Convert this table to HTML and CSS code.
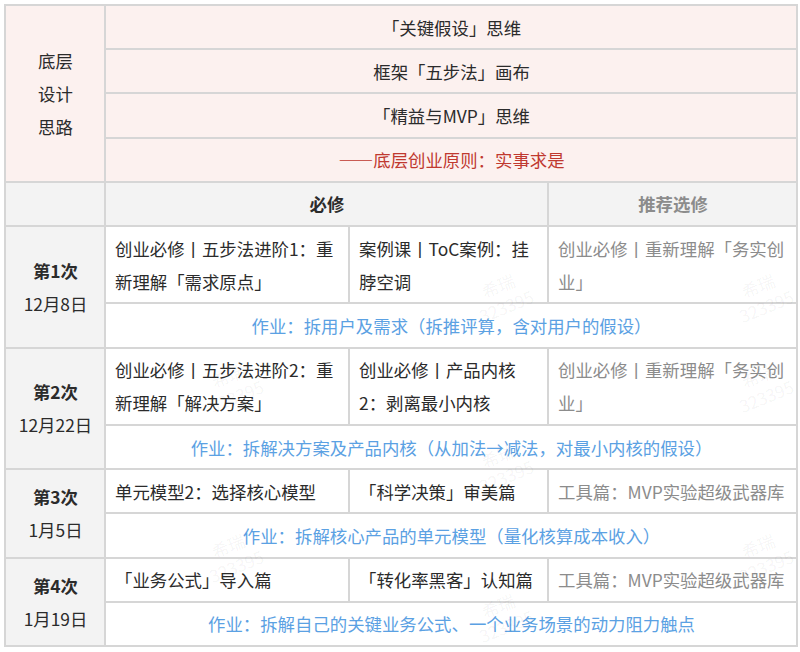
FILE: index.html
```html
<!DOCTYPE html>
<html lang="zh-CN">
<head>
<meta charset="utf-8">
<link rel="stylesheet" href="styles.css">
</head>
<body>
<div class="wrap">
<table class="plan">
  <colgroup>
    <col class="c0"><col class="c1"><col class="c2"><col class="c3">
  </colgroup>
  <tbody>
    <tr class="pink">
      <td rowspan="4" class="side">底层<br>设计<br>思路</td>
      <td colspan="3" class="center">「关键假设」思维</td>
    </tr>
    <tr class="pink"><td colspan="3" class="center">框架「五步法」画布</td></tr>
    <tr class="pink"><td colspan="3" class="center">「精益与MVP」思维</td></tr>
    <tr class="pink"><td colspan="3" class="center red">——底层创业原则：实事求是</td></tr>

    <tr class="head">
      <td></td>
      <td colspan="2" class="center bold">必修</td>
      <td class="center bold muted">推荐选修</td>
    </tr>

    <tr>
      <td rowspan="2" class="week"><b>第1次</b><br>12月8日</td>
      <td>创业必修丨五步法进阶1：重新理解「需求原点」</td>
      <td>案例课丨ToC案例：挂脖空调</td>
      <td class="muted">创业必修丨重新理解「务实创业」</td>
    </tr>
    <tr><td colspan="3" class="center blue">作业：拆用户及需求（拆推评算，含对用户的假设）</td></tr>

    <tr>
      <td rowspan="2" class="week"><b>第2次</b><br>12月22日</td>
      <td>创业必修丨五步法进阶2：重新理解「解决方案」</td>
      <td>创业必修丨产品内核2：剥离最小内核</td>
      <td class="muted">创业必修丨重新理解「务实创业」</td>
    </tr>
    <tr><td colspan="3" class="center blue">作业：拆解决方案及产品内核（从加法→减法，对最小内核的假设）</td></tr>

    <tr>
      <td rowspan="2" class="week"><b>第3次</b><br>1月5日</td>
      <td>单元模型2：选择核心模型</td>
      <td>「科学决策」审美篇</td>
      <td class="muted nowrap">工具篇：MVP实验超级武器库</td>
    </tr>
    <tr><td colspan="3" class="center blue">作业：拆解核心产品的单元模型（量化核算成本收入）</td></tr>

    <tr>
      <td rowspan="2" class="week"><b>第4次</b><br>1月19日</td>
      <td>「业务公式」导入篇</td>
      <td>「转化率黑客」认知篇</td>
      <td class="muted nowrap">工具篇：MVP实验超级武器库</td>
    </tr>
    <tr><td colspan="3" class="center blue">作业：拆解自己的关键业务公式、一个业务场景的动力阻力触点</td></tr>
  </tbody>
</table>
<div class="wm" style="left:470px;top:270px">希瑞<br>323395</div>
<div class="wm" style="left:730px;top:270px">希瑞<br>323395</div>
<div class="wm" style="left:200px;top:360px">希瑞<br>323395</div>
<div class="wm" style="left:730px;top:360px">希瑞<br>323395</div>
<div class="wm" style="left:470px;top:440px">希瑞<br>323395</div>
<div class="wm" style="left:200px;top:530px">希瑞<br>323395</div>
<div class="wm" style="left:730px;top:530px">希瑞<br>323395</div>
<div class="wm" style="left:470px;top:590px">希瑞<br>323395</div>
</div>
</body>
</html>
```

FILE: styles.css
```css
html, body {
  margin: 0;
  padding: 0;
  background: #ffffff;
}
body {
  padding: 4px;
  font-family: "Noto Sans CJK SC", "Noto Sans", sans-serif;
  font-size: 17.4px;
  color: #2b2b2b;
}
.wrap {
  position: relative;
  width: 792px;
}
.plan {
  width: 792px;
  border-collapse: collapse;
  table-layout: fixed;
}
.c0 { width: 100px; }
.c1 { width: 244px; }
.c2 { width: 199px; }
.c3 { width: 249px; }
.plan td {
  border: 2px solid #d6d6d6;
  padding: 4.5px 8px 4.5px 9px;
  line-height: 33.2px;
  vertical-align: middle;
  text-align: left;
}
.plan td.nowrap { white-space: nowrap; }
.pink td { background: #fcf1ef; }
.head td { background: #f3f3f3; }
.side {
  text-align: center !important;
  background: #fcf1ef;
}
.week {
  text-align: center !important;
  background: #f3f3f3;
  color: #2b2b2b;
}
.week b { font-weight: 700; }
.center { text-align: center !important; }
.bold { font-weight: 700; }
.muted { color: #8c8c8c; }
.red { color: #c0392f; }
.blue { color: #5ba1e3; }
.wm {
  position: absolute;
  transform: rotate(-22deg);
  font-size: 17px;
  line-height: 22px;
  color: rgba(0, 0, 0, 0.05);
  pointer-events: none;
  text-align: center;
}
```
